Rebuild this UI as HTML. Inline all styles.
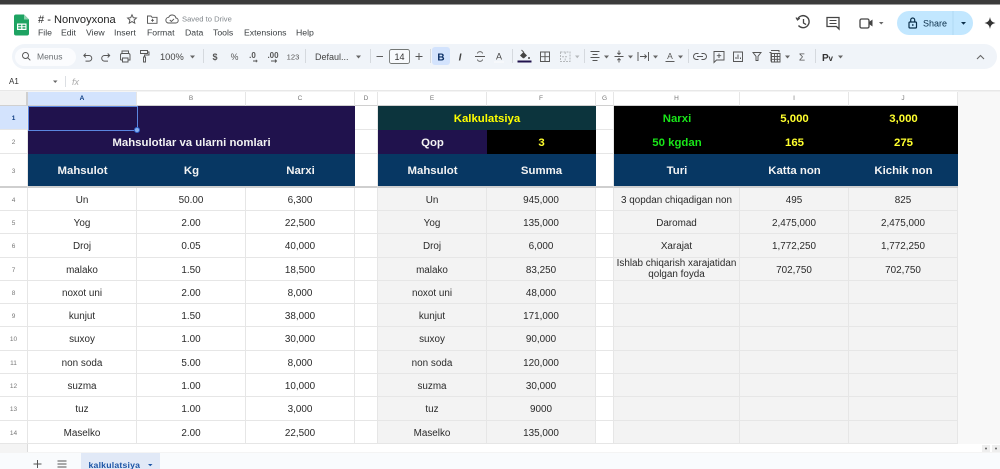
<!DOCTYPE html>
<html lang="uz">
<head>
<meta charset="utf-8">
<title># - Nonvoyxona</title>
<style>
html,body{margin:0;padding:0;width:1000px;height:469px;overflow:hidden;background:#fff;font-family:"Liberation Sans",Arial,sans-serif}
#right{position:absolute;left:958px;top:91px;width:42px;height:353px;background:#f8f8f8}
table{position:absolute;left:0;top:92px;width:958px;table-layout:fixed;border-collapse:separate;border-spacing:0}
td{padding:3px 0 0 0;box-sizing:border-box;text-align:center;vertical-align:middle;font-size:9.9px;line-height:11.5px;color:#2a2a2a;border-right:1px solid #e6e6e6;border-bottom:1px solid #e6e6e6;overflow:hidden;white-space:nowrap}
td.n{font-size:6.5px;color:#777;background:#fff}
td.ch{font-size:6.5px;color:#777;background:#fff;border-bottom:1px solid #d0d0d0;border-right:1px solid #e6e6e6;padding:0}
td.sel{background:#d3e3fd;color:#0b3a80;font-weight:bold}
td.c0{background:#f3f3f3;border-right:2px solid #cfcfcf;border-bottom:1px solid #d0d0d0;padding:0}
td.g{background:#f3f3f3}
td.w{background:#fff}
td.b{font-weight:bold;font-size:11.4px;color:#f3f3f3;border:0}
td.hd{font-weight:bold;font-size:11.4px;color:#f3f3f3;background:#073763;border-right:0;border-bottom:2px solid #cfcfcf}
td.purple{background:#20124d}
td.teal{background:#0c343d;color:#ffff00}
td.blk{background:#000;color:#ffff2e}
td.grn{background:#000;color:#19e619}
td.thk{border-bottom:2px solid #cfcfcf}
td.two{padding:0;line-height:11px}
#sel{position:absolute;left:28px;top:106px;width:108px;height:23px;border:1px solid #5b86e0}
#handle{position:absolute;left:134px;top:127px;width:4px;height:4px;border-radius:50%;background:#8ab0ee;border:1.2px solid #2f66cf}
svg{position:absolute;left:0;top:0}
svg text{font-family:"Liberation Sans",Arial,sans-serif}
.i{fill:none;stroke:#555;stroke-width:.95}
.f{fill:#666}
.m{font-size:8.7px;fill:#3c4043}
.t{font-size:8.6px;fill:#555}
</style>
</head>
<body>
<div id="right"></div>
<table>
<colgroup><col style="width:28px"><col style="width:109px"><col style="width:109px"><col style="width:109px"><col style="width:23px"><col style="width:109px"><col style="width:109px"><col style="width:18px"><col style="width:126px"><col style="width:109px"><col style="width:109px"></colgroup>
<tr style="height:14px"><td class="c0" style="height:14px"></td><td class="ch sel">A</td><td class="ch">B</td><td class="ch">C</td><td class="ch">D</td><td class="ch">E</td><td class="ch">F</td><td class="ch">G</td><td class="ch">H</td><td class="ch">I</td><td class="ch">J</td></tr>
<tr style="height:24px"><td class="n sel" style="height:24px">1</td><td class="b purple" colspan="3"></td><td class="w"></td><td class="b teal" colspan="2">Kalkulatsiya</td><td class="w"></td><td class="b grn">Narxi</td><td class="b blk">5,000</td><td class="b blk">3,000</td></tr>
<tr style="height:24px"><td class="n" style="height:24px">2</td><td class="b purple" colspan="3">Mahsulotlar va ularni nomlari</td><td class="w"></td><td class="b purple">Qop</td><td class="b blk">3</td><td class="w"></td><td class="b grn">50 kgdan</td><td class="b blk">165</td><td class="b blk">275</td></tr>
<tr style="height:34px"><td class="n thk" style="height:34px">3</td><td class="hd">Mahsulot</td><td class="hd">Kg</td><td class="hd">Narxi</td><td class="w thk"></td><td class="hd">Mahsulot</td><td class="hd">Summa</td><td class="w thk"></td><td class="hd">Turi</td><td class="hd">Katta non</td><td class="hd">Kichik non</td></tr>
<tr style="height:23px"><td class="n" style="height:23px">4</td><td>Un</td><td>50.00</td><td>6,300</td><td></td><td class="g">Un</td><td class="g">945,000</td><td></td><td class="g">3 qopdan chiqadigan non</td><td class="g">495</td><td class="g">825</td></tr>
<tr style="height:23px"><td class="n" style="height:23px">5</td><td>Yog</td><td>2.00</td><td>22,500</td><td></td><td class="g">Yog</td><td class="g">135,000</td><td></td><td class="g">Daromad</td><td class="g">2,475,000</td><td class="g">2,475,000</td></tr>
<tr style="height:24px"><td class="n" style="height:24px">6</td><td>Droj</td><td>0.05</td><td>40,000</td><td></td><td class="g">Droj</td><td class="g">6,000</td><td></td><td class="g">Xarajat</td><td class="g">1,772,250</td><td class="g">1,772,250</td></tr>
<tr style="height:23px"><td class="n" style="height:23px">7</td><td>malako</td><td>1.50</td><td>18,500</td><td></td><td class="g">malako</td><td class="g">83,250</td><td></td><td class="g two">Ishlab chiqarish xarajatidan<br>qolgan foyda</td><td class="g">702,750</td><td class="g">702,750</td></tr>
<tr style="height:23px"><td class="n" style="height:23px">8</td><td>noxot uni</td><td>2.00</td><td>8,000</td><td></td><td class="g">noxot uni</td><td class="g">48,000</td><td></td><td class="g"></td><td class="g"></td><td class="g"></td></tr>
<tr style="height:23px"><td class="n" style="height:23px">9</td><td>kunjut</td><td>1.50</td><td>38,000</td><td></td><td class="g">kunjut</td><td class="g">171,000</td><td></td><td class="g"></td><td class="g"></td><td class="g"></td></tr>
<tr style="height:24px"><td class="n" style="height:24px">10</td><td>suxoy</td><td>1.00</td><td>30,000</td><td></td><td class="g">suxoy</td><td class="g">90,000</td><td></td><td class="g"></td><td class="g"></td><td class="g"></td></tr>
<tr style="height:23px"><td class="n" style="height:23px">11</td><td>non soda</td><td>5.00</td><td>8,000</td><td></td><td class="g">non soda</td><td class="g">120,000</td><td></td><td class="g"></td><td class="g"></td><td class="g"></td></tr>
<tr style="height:23px"><td class="n" style="height:23px">12</td><td>suzma</td><td>1.00</td><td>10,000</td><td></td><td class="g">suzma</td><td class="g">30,000</td><td></td><td class="g"></td><td class="g"></td><td class="g"></td></tr>
<tr style="height:24px"><td class="n" style="height:24px">13</td><td>tuz</td><td>1.00</td><td>3,000</td><td></td><td class="g">tuz</td><td class="g">9000</td><td></td><td class="g"></td><td class="g"></td><td class="g"></td></tr>
<tr style="height:23px"><td class="n" style="height:23px">14</td><td>Maselko</td><td>2.00</td><td>22,500</td><td></td><td class="g">Maselko</td><td class="g">135,000</td><td></td><td class="g"></td><td class="g"></td><td class="g"></td></tr>
</table>
<div id="sel"></div><div id="handle"></div>

<svg width="1000" height="469" viewBox="0 0 1000 469">
<rect x="0" y="0" width="1000" height="4" fill="#3b3b3b"/>
<rect x="0" y="4" width="1000" height="1" fill="#9a9a9a"/>
<rect x="12" y="44" width="985" height="25" rx="12.5" fill="#f0f4f9"/>
<rect x="15" y="48" width="61" height="18" rx="9" fill="#fbfcfe"/>
<rect x="0" y="90" width="1000" height="1.500" fill="#e8e8e8"/>

<path d="M14 16.500a2 2 0 0 1 2-2h8l5 5v14a2 2 0 0 1-2 2H16a2 2 0 0 1-2-2z" fill="#1ea362"/>
<path d="M24 14.500l5 5h-5z" fill="#8ed1ae"/>
<path d="M17 23.500h9.500v6.500H17z M18.200 24.700v1.500h3v-1.500z M22.400 24.700v1.500h3v-1.500z M18.200 27.300v1.500h3v-1.500z M22.400 27.300v1.500h3v-1.500z" fill="#fff" fill-rule="evenodd"/>

<text x="38" y="23" font-size="11.100" fill="#1f1f1f"># - Nonvoyxona</text>
<path class="i" d="M132 14.800l1.300 2.900 3.100.3-2.300 2.100.7 3.100-2.800-1.600-2.800 1.600.7-3.100-2.300-2.100 3.100-.3z"/>
<path class="i" d="M147.500 16h3.500l1 1.300h5v6h-9.500z M151 20.300h3 M152.500 18.800v3"/>
<path class="i" d="M168 23h7.500a2.500 2.500 0 0 0 .4-5 3.800 3.800 0 0 0-7.200-.7 2.900 2.900 0 0 0-.7 5.700z M169.800 20l1.600 1.500 2.600-2.600"/>
<text x="182" y="21.500" font-size="7.600" fill="#80868b">Saved to Drive</text>

<text class="m" x="38" y="35.500">File</text>
<text class="m" x="61" y="35.500">Edit</text>
<text class="m" x="86" y="35.500">View</text>
<text class="m" x="114" y="35.500">Insert</text>
<text class="m" x="147" y="35.500">Format</text>
<text class="m" x="185" y="35.500">Data</text>
<text class="m" x="213" y="35.500">Tools</text>
<text class="m" x="244" y="35.500">Extensions</text>
<text class="m" x="296" y="35.500">Help</text>

<circle class="i" cx="25.500" cy="55.500" r="3"/><path class="i" d="M27.700 57.700l2.600 2.600"/>
<text x="37" y="59.500" font-size="8.500" fill="#6b6f73">Menus</text>

<path class="i" d="M84 55.500h5a2.800 2.800 0 0 1 0 5.600h-3.500 M85.800 53.500l-2 2 2 2"/>
<path class="i" d="M109.500 55.500h-5a2.800 2.800 0 0 0 0 5.600h3.500 M107.700 53.500l2 2-2 2"/>
<path class="i" d="M122 53.500v-2.500h6.500v2.500 M120.500 60v-5a1.500 1.500 0 0 1 1.500-1.500h6.500a1.500 1.500 0 0 1 1.500 1.500v5h-2 M122.500 58h5.500v4h-5.500z M120.500 60h2"/>
<path class="i" d="M140.500 50.500h7v3h-7z M147.500 52h1.500v3h-4.500v2 M143.500 57h2v5h-2z"/>

<text x="160" y="60" font-size="9.300" fill="#444">100%</text>
<path class="f" d="M190 55.500h5l-2.500 3z"/>
<rect x="203" y="49" width="1" height="14" fill="#d5d9de"/>
<text x="215" y="60" font-size="9" fill="#555" text-anchor="middle" font-weight="bold">$</text>
<text x="234.500" y="60" font-size="8.800" fill="#555" text-anchor="middle">%</text>
<text x="252.500" y="58" font-size="8" fill="#555" text-anchor="middle" font-weight="bold">.0</text>
<path class="i" d="M253 61h4.500 M256.300 59.800v2.400"/>
<text x="273" y="58" font-size="8" fill="#555" text-anchor="middle" font-weight="bold">.00</text>
<path class="i" d="M271 61h5.500 M275 59.500l1.500 1.500-1.500 1.500"/>
<text x="293" y="59.500" font-size="7.600" fill="#555" text-anchor="middle">123</text>
<rect x="305" y="49" width="1" height="14" fill="#d5d9de"/>
<text x="315" y="60" font-size="9" fill="#444">Defaul...</text>
<path class="f" d="M356 55.500h5l-2.500 3z"/>
<rect x="370" y="49" width="1" height="14" fill="#d5d9de"/>
<path class="i" d="M376.500 56.500h6.500"/>
<rect x="389.500" y="49.500" width="20" height="14" rx="2" fill="#f8fafd" stroke="#747775" stroke-width=".9"/>
<text x="399.500" y="60" font-size="9" fill="#333" text-anchor="middle">14</text>
<path class="i" d="M415.500 56.500h7 M419 53v7"/>
<rect x="430" y="49" width="1" height="14" fill="#d5d9de"/>
<rect x="432" y="47" width="18" height="18" rx="3" fill="#d3e3fd"/>
<text x="441" y="60.500" font-size="10" font-weight="bold" fill="#0b2f66" text-anchor="middle">B</text>
<text x="460" y="60.500" font-size="10" font-style="italic" font-family="Liberation Serif" font-weight="bold" fill="#444" text-anchor="middle">I</text>
<path class="i" d="M475 56.500h10 M477.500 53.500a2.500 1.800 0 0 1 5 0 M477.500 59.500a2.500 1.800 0 0 0 5 0"/>
<text x="499" y="59.500" font-size="9" fill="#444" text-anchor="middle">A</text>
<rect x="494" y="61" width="10" height="2" fill="#f6f8fb"/>
<rect x="512" y="49" width="1" height="14" fill="#d5d9de"/>
<path d="M520 55.500l3.500-3.500 3.500 3.500-3 2.700h-1z" fill="#444"/><path class="i" d="M521.500 50l2.500 2.500"/><circle cx="529" cy="58" r="1" fill="#444"/>
<rect x="517.500" y="60.500" width="14" height="2" fill="#20124d"/>
<path class="i" d="M540.500 52h9v9.500h-9z M545 52v9.500 M540.500 56.700h9"/>
<path d="M560.500 52h9.500v9.500h-9.500z M565.200 52v3 M565.200 58.500v3 M562 56.700h6" fill="none" stroke="#b5b8bb" stroke-width="1" stroke-dasharray="2 1"/>
<path d="M575 55.500h4.500l-2.250 2.800z" fill="#b5b8bb"/>
<rect x="584" y="49" width="1" height="14" fill="#d5d9de"/>
<path class="i" d="M590.500 51.500h9 M592.500 54.500h5 M590.500 57.500h9 M592.500 60.500h5"/>
<path class="f" d="M604 55.500h5l-2.500 3z"/>
<path class="i" d="M614.500 56.500h9 M619 50.500v3.800 M617.300 52.800l1.700 1.700 1.700-1.700 M619 62.500v-3.800 M617.300 60.200l1.700-1.700 1.700 1.700"/>
<path class="f" d="M628 55.500h5l-2.500 3z"/>
<path class="i" d="M638 52v9 M648.500 52v9 M640 56.500h6.500 M644.500 54.500l2 2-2 2"/>
<path class="f" d="M653 55.500h5l-2.500 3z"/>
<text x="670" y="59" font-size="8.500" fill="#555" text-anchor="middle">A</text><path class="i" d="M665.500 61.500h9"/>
<path class="f" d="M678 55.500h5l-2.500 3z"/>
<rect x="688" y="49" width="1" height="14" fill="#d5d9de"/>
<path class="i" d="M698.500 53.500h-2a3 3 0 0 0 0 6h2 M701.500 53.500h2a3 3 0 0 1 0 6h-2 M697 56.500h6"/>
<path class="i" d="M714 51.500h10v8.500h-7.500l-2.500 2.500z M719 53.500v4.500 M716.800 55.700h4.400"/>
<path class="i" d="M733.500 52h9v9.500h-9z M736 59v-2 M738 59v-4.500 M740.500 59v-1.500"/>
<path class="i" d="M753 52.500h8l-3 3.800v4.200h-2v-4.200z"/>
<path class="i" d="M771 50.500h8v1.800 M769.500 52.500h1.500v9 M771.500 53.500h8.500v8.500h-8.500z M771.500 56.500h8.500 M771.500 59.300h8.500 M774.500 53.500v8.500 M777.300 53.500v8.500"/>
<path class="f" d="M785 55.500h5l-2.500 3z"/>
<text x="802" y="60.500" font-size="10" fill="#555" text-anchor="middle">Σ</text>
<rect x="815" y="49" width="1" height="14" fill="#d5d9de"/>
<text x="822" y="61" font-size="10" font-weight="bold" fill="#333">P</text>
<text x="828.500" y="61" font-size="8" font-weight="bold" fill="#333">v</text>
<path class="f" d="M838 55.500h5l-2.500 3z"/>
<path d="M977 59l3.500-3.500 3.500 3.500" fill="none" stroke="#666" stroke-width="1.100"/>

<path d="M797.500 19.500a6 6 0 1 1 1 6" fill="none" stroke="#444" stroke-width="1.400"/>
<path d="M796 17.500l1.500 2.500 2.300-1.800" fill="none" stroke="#444" stroke-width="1.200"/>
<path d="M803.500 19v4l2.600 1.600" fill="none" stroke="#444" stroke-width="1.300"/>
<path d="M827 17.500h12v11.500l-2.500-2.500H827z" fill="none" stroke="#444" stroke-width="1.300"/>
<path d="M829.500 20.500h7 M829.500 23.500h7" stroke="#444" stroke-width="1"/>
<rect x="860" y="19" width="9" height="9" rx="1.500" fill="none" stroke="#444" stroke-width="1.300"/>
<path d="M869 22l3.500-2.500v7L869 24z" fill="#444"/>
<path class="f" d="M879 22h4.500l-2.250 2.500z"/>
<rect x="897" y="11" width="76" height="24" rx="12" fill="#c2e7ff"/>
<rect x="952.500" y="11" width="1" height="24" fill="#b0daf3"/>
<rect x="909" y="22" width="7.500" height="6" rx="1" fill="none" stroke="#0b2f4a" stroke-width="1.200"/>
<path d="M910.700 22v-2a2 2 0 0 1 4 0v2" fill="none" stroke="#0b2f4a" stroke-width="1.200"/>
<circle cx="912.800" cy="25" r=".9" fill="#0b2f4a"/>
<text x="923" y="26.500" font-size="9" fill="#0b2f4a">Share</text>
<path d="M961 22h5l-2.500 2.800z" fill="#0b2f4a"/>
<path d="M990 17c.6 3.700 2 5.200 5.500 6-3.500.8-4.900 2.300-5.500 6-.6-3.700-2-5.200-5.500-6 3.500-.8 4.900-2.300 5.500-6z" fill="#333"/>

<text x="9" y="84" font-size="8" fill="#333">A1</text>
<path class="f" d="M53 80.500h4.500l-2.250 2.500z"/>
<rect x="65" y="76" width="1" height="11" fill="#dcdfe3"/>
<text x="72" y="85" font-size="9" font-style="italic" font-family="Liberation Serif" fill="#aaa">fx</text>

<rect x="0" y="444" width="1000" height="9" fill="#fff"/>
<rect x="0" y="444" width="28" height="8" fill="#f4f4f4"/>
<rect x="27" y="444" width="1" height="8" fill="#dcdcdc"/>
<rect x="0" y="452.500" width="1000" height="1" fill="#eaeaea"/>
<rect x="0" y="453" width="1000" height="16" fill="#f9fbfd"/>
<rect x="982" y="445" width="8" height="7" fill="#eee"/><rect x="992" y="445" width="8" height="7" fill="#eee"/>
<circle cx="986" cy="448.500" r="1" fill="#666"/><circle cx="996" cy="448.500" r="1" fill="#666"/>
<path d="M33.500 464h8 M37.500 460v8" stroke="#555" stroke-width="1" fill="none"/>
<path d="M57.500 461h9 M57.500 464h9 M57.500 467h9" stroke="#555" stroke-width="1" fill="none"/>
<rect x="81" y="453" width="79" height="16" fill="#e1e9f7"/>
<text x="88.500" y="468" font-size="8.700" font-weight="bold" letter-spacing=".2" fill="#1d55a6">kalkulatsiya</text>
<path d="M148 464h4.500l-2.250 2.300z" fill="#1d55a6"/>
</svg>
</body>
</html>
